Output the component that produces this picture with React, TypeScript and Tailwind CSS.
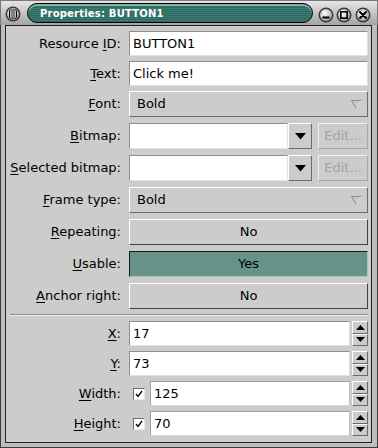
import React from 'react';

const FONT = { fontFamily: '"DejaVu Sans", Verdana, sans-serif' };

function Label({ text, u, rest }: { text?: string; u: string; rest: string }) {
  return (
    <div className="w-[116px] shrink-0 text-right pr-[1px] whitespace-nowrap">
      {text}
      <span className="underline underline-offset-2">{u}</span>
      {rest}
    </div>
  );
}

function Row({ children, className = '' }: { children: React.ReactNode; className?: string }) {
  return <div className={`flex items-center gap-[7px] pr-[3px] ${className}`}>{children}</div>;
}

const sunken = 'bg-white border border-t-[#8e8e8e] border-l-[#8e8e8e] border-b-[#e2e2e2] border-r-[#e2e2e2]';
const raised = 'bg-[#cccccc] border border-t-white border-l-white border-b-[#6a6a6a] border-r-[#6a6a6a]';

function DownTri() {
  return (
    <svg width="11" height="7" viewBox="0 0 11 7">
      <polygon points="0,0 11,0 5.5,6.5" fill="#000" />
    </svg>
  );
}

function Spinner() {
  return (
    <div className="w-[16px] h-full flex flex-col shrink-0">
      <div className={`${raised} flex-1 flex items-center justify-center`}>
        <svg width="9" height="5" viewBox="0 0 9 5">
          <polygon points="0,5 9,5 4.5,0" fill="#000" />
        </svg>
      </div>
      <div className={`${raised} flex-1 flex items-center justify-center`}>
        <svg width="9" height="5" viewBox="0 0 9 5">
          <polygon points="0,0 9,0 4.5,5" fill="#000" />
        </svg>
      </div>
    </div>
  );
}

function Check() {
  return (
    <div className="w-[12px] h-[12px] shrink-0 bg-white border border-t-[#6e6e6e] border-l-[#6e6e6e] border-b-[#e8e8e8] border-r-[#e8e8e8] flex items-center justify-center">
      <svg width="8" height="8" viewBox="0 0 8 8">
        <path d="M1 4 L3 6.5 L7 1" stroke="#000" strokeWidth="1.3" fill="none" />
      </svg>
    </div>
  );
}

function Combo({ value }: { value: string }) {
  return (
    <div className={`${raised} flex-1 h-full flex items-center pl-[7px] pr-[5px]`}>
      <span className="flex-1">{value}</span>
      <svg width="11" height="9" viewBox="0 0 11 9">
        <polygon points="0.5,0.5 10.5,0.5 5.5,8.5" fill="none" stroke="#8a8a8a" />
        <line x1="5.5" y1="8.5" x2="10.5" y2="0.5" stroke="#f4f4f4" />
      </svg>
    </div>
  );
}

function Bitmap() {
  return (
    <div className="flex-1 h-full flex gap-[6px]">
      <div className="flex-1 flex">
        <div className={`${sunken} flex-1`} />
        <div className={`${raised} w-[24px] flex items-center justify-center`}>
          <DownTri />
        </div>
      </div>
      <div className="w-[50px] bg-[#cccccc] border border-t-[#f2f2f2] border-l-[#f2f2f2] border-b-[#a8a8a8] border-r-[#a8a8a8] flex items-center justify-center text-[#a2a2a2]">
        Edit...
      </div>
    </div>
  );
}

function Toggle({ on }: { on?: boolean }) {
  return on ? (
    <div className="flex-1 h-full bg-[#669289] border border-t-[#1a1a1a] border-l-[#1a1a1a] border-b-[#a8c4be] border-r-[#a8c4be] flex items-center justify-center">
      Yes
    </div>
  ) : (
    <div className={`${raised} border-b-[#444] border-r-[#444] flex-1 h-full flex items-center justify-center`}>No</div>
  );
}

function TitleButton({ kind }: { kind: 'min' | 'max' | 'close' | 'menu' }) {
  return (
    <svg width="16" height="16" viewBox="0 0 16 16">
      <defs>
        <radialGradient id={`g-${kind}`} cx="40%" cy="35%" r="70%">
          <stop offset="0%" stopColor="#ffffff" />
          <stop offset="100%" stopColor="#9a9a9a" />
        </radialGradient>
      </defs>
      <circle cx="8" cy="8" r="7.5" fill="#3a3a3a" />
      <circle cx="8" cy="8" r="6" fill={`url(#g-${kind})`} />
      {kind === 'min' && <rect x="4.5" y="9.5" width="7" height="2" fill="#000" />}
      {kind === 'max' && <rect x="4.8" y="4.8" width="6.4" height="6.4" fill="none" stroke="#000" strokeWidth="1.6" />}
      {kind === 'close' && (
        <path d="M5 5 L11 11 M11 5 L5 11" stroke="#000" strokeWidth="2" strokeLinecap="round" />
      )}
      {kind === 'menu' && (
        <g>
          <rect x="4.5" y="4" width="7" height="8" rx="1" fill="#fff" stroke="#000" />
          <path d="M5.5 6 H10.5 M5.5 8 H10.5 M5.5 10 H10.5" stroke="#000" strokeWidth="1" />
        </g>
      )}
    </svg>
  );
}

export default function App() {
  return (
    <div className="w-[378px] h-[448px] flex flex-col bg-[#bdbdbd] text-[13px] text-black" style={FONT}>
      {/* title bar */}
      <div className="h-[25px] shrink-0 flex items-start bg-gradient-to-b from-[#e6e6e6] to-[#a4a4a4] border-t border-l border-r border-[#7a7a7a]">
        <div className="mt-[5px] ml-[4px]">
          <TitleButton kind="menu" />
        </div>
        <div className="ml-[6px] mt-[2px] w-[286px] h-[20px] rounded-full border border-black bg-[repeating-linear-gradient(0deg,#2c6a62_0px,#2c6a62_1px,#3a7a71_1px,#3a7a71_2px)] shadow-[inset_0_2px_0_#7fb3aa] flex items-center pl-[12px]">
          <span className="text-white font-bold text-[10px] tracking-[0.2px]">Properties: BUTTON1</span>
        </div>
        <div className="ml-[5px] mt-[6px] flex gap-[2px]">
          <TitleButton kind="min" />
          <TitleButton kind="max" />
          <div className="ml-[1px]">
            <TitleButton kind="close" />
          </div>
        </div>
      </div>

      {/* frame */}
      <div className="flex-1 flex flex-col pl-[4px] pr-[5px] pb-[4px] border-l border-r border-b border-[#3a3a3a]">
        <div className="flex-1 bg-[#cccccc] border border-[#222] pt-[5px] flex flex-col">
          <Row className="h-[25px]">
            <Label text="Resource " u="I" rest="D:" />
            <div className={`${sunken} flex-1 h-full flex items-center pl-[3px]`}>BUTTON1</div>
          </Row>
          <Row className="h-[25px] mt-[5px]">
            <Label u="T" rest="ext:" />
            <div className={`${sunken} flex-1 h-full flex items-center pl-[3px]`}>Click me!</div>
          </Row>
          <Row className="h-[26px] mt-[5px]">
            <Label u="F" rest="ont:" />
            <Combo value="Bold" />
          </Row>
          <Row className="h-[26px] mt-[6px]">
            <Label u="B" rest="itmap:" />
            <Bitmap />
          </Row>
          <Row className="h-[26px] mt-[6px]">
            <Label u="S" rest="elected bitmap:" />
            <Bitmap />
          </Row>
          <Row className="h-[26px] mt-[6px]">
            <Label u="F" rest="rame type:" />
            <Combo value="Bold" />
          </Row>
          <Row className="h-[26px] mt-[6px]">
            <Label u="R" rest="epeating:" />
            <Toggle />
          </Row>
          <Row className="h-[26px] mt-[6px]">
            <Label u="U" rest="sable:" />
            <Toggle on />
          </Row>
          <Row className="h-[26px] mt-[6px]">
            <Label u="A" rest="nchor right:" />
            <Toggle />
          </Row>

          <div className="mt-[5px] ml-[4px] mr-[3px] border-t border-b border-t-[#8c8c8c] border-b-[#f0f0f0]" />

          <Row className="h-[25px] mt-[5px]">
            <Label u="X" rest=":" />
            <div className="flex-1 h-full flex gap-[2px]">
              <div className={`${sunken} flex-1 flex items-center pl-[3px]`}>17</div>
              <Spinner />
            </div>
          </Row>
          <Row className="h-[25px] mt-[5px]">
            <Label u="Y" rest=":" />
            <div className="flex-1 h-full flex gap-[2px]">
              <div className={`${sunken} flex-1 flex items-center pl-[3px]`}>73</div>
              <Spinner />
            </div>
          </Row>
          <Row className="h-[25px] mt-[5px]">
            <Label u="W" rest="idth:" />
            <div className="flex-1 h-full flex items-center">
              <div className="ml-[4px] mr-[5px]">
                <Check />
              </div>
              <div className="flex-1 h-full flex gap-[2px]">
                <div className="flex-1 bg-white border border-[#a0a0a0] border-b-[#d8d8d8] border-r-[#c0c0c0] flex items-center pl-[3px]">125</div>
                <Spinner />
              </div>
            </div>
          </Row>
          <Row className="h-[25px] mt-[5px]">
            <Label u="H" rest="eight:" />
            <div className="flex-1 h-full flex items-center">
              <div className="ml-[4px] mr-[5px]">
                <Check />
              </div>
              <div className="flex-1 h-full flex gap-[2px]">
                <div className="flex-1 bg-white border border-[#a0a0a0] border-b-[#d8d8d8] border-r-[#c0c0c0] flex items-center pl-[3px]">70</div>
                <Spinner />
              </div>
            </div>
          </Row>
        </div>
      </div>
    </div>
  );
}
